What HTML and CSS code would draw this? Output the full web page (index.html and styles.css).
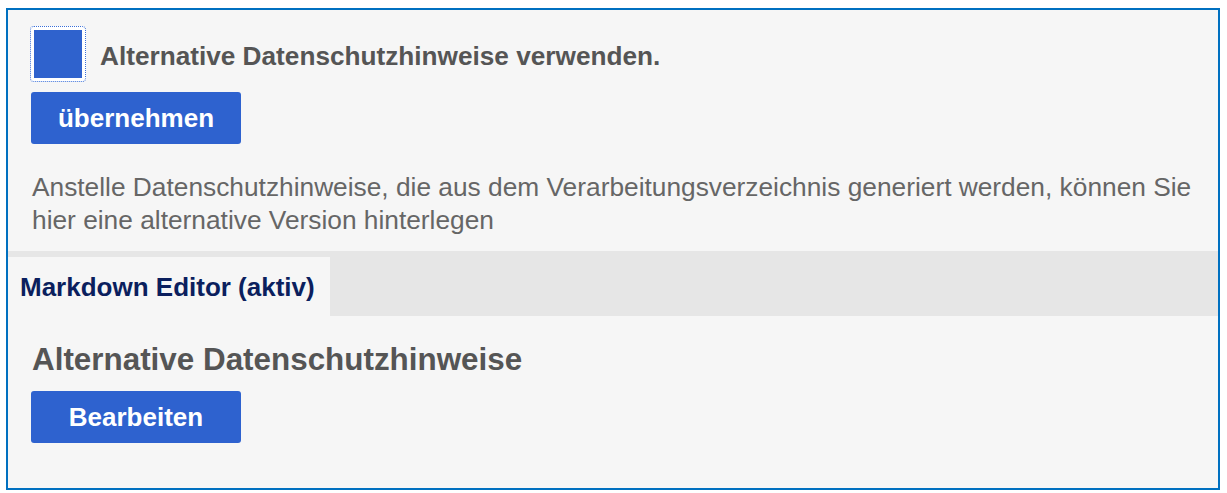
FILE: index.html
```html
<!DOCTYPE html>
<html lang="de">
<head>
    <meta charset="UTF-8">
    <title>Datenschutzhinweise</title>
    <link rel="stylesheet" href="styles.css">
</head>
<body>
    <div class="frame">
        <div class="panel">
            <label class="check-row">
                <span class="check-box"><span class="check-fill"></span></span>
                <span class="check-label">Alternative Datenschutzhinweise verwenden.</span>
            </label>
            <button class="btn">übernehmen</button>
            <p class="hint">Anstelle Datenschutzhinweise, die aus dem Verarbeitungsverzeichnis generiert werden, können Sie hier eine alternative Version hinterlegen</p>
        </div>

        <div class="tabs">
            <div class="tab active">Markdown Editor (aktiv)</div>
        </div>

        <div class="panel editor">
            <h2 class="editor-title">Alternative Datenschutzhinweise</h2>
            <button class="btn">Bearbeiten</button>
        </div>
    </div>
</body>
</html>
```

FILE: styles.css
```css
* {
    margin: 0;
    padding: 0;
    box-sizing: border-box;
}

body {
    font-family: "Liberation Sans", Arial, sans-serif;
    background: #fff;
    padding: 8px 7px 3px 6px;
}

.frame {
    height: 482px;
    border: 2px solid #0070c0;
    background: #f6f6f6;
    overflow: hidden;
}

.panel {
    padding: 16px 22px 0 22px;
}

.check-row {
    display: flex;
    align-items: center;
    gap: 14px;
    height: 56px;
}

.check-box {
    width: 56px;
    height: 56px;
    border: 1px dotted #3a6fd8;
    border-radius: 4px;
    padding: 3px;
    background: #fff;
    display: flex;
}

.check-fill {
    flex: 1;
    background: #2f62cd;
}

.check-label {
    font-size: 26.2px;
    line-height: 30px;
    font-weight: bold;
    color: #555;
    padding-top: 3px;
}

.btn {
    display: block;
    width: 210px;
    height: 52px;
    border: none;
    border-radius: 3px;
    background: #2e62cf;
    color: #fff;
    font-family: inherit;
    font-size: 26px;
    font-weight: bold;
    margin-top: 10px;
    margin-left: 1px;
}

.hint {
    margin-top: 27px;
    margin-right: -12px;
    padding-left: 2px;
    font-size: 26.3px;
    line-height: 33px;
    color: #666;
}

.tabs {
    margin-top: 14px;
    height: 65px;
    background: #e6e6e6;
    padding-top: 6px;
    display: flex;
}

.tab {
    width: 322px;
    background: #f6f6f6;
    padding: 15px 0 0 12px;
    font-size: 26px;
    line-height: 30px;
    font-weight: bold;
    color: #0b1f5e;
}

.editor {
    padding-top: 27px;
}

.editor-title {
    font-size: 31.4px;
    line-height: 34px;
    font-weight: bold;
    color: #555;
    padding-left: 2px;
    margin-bottom: 14px;
}
```
